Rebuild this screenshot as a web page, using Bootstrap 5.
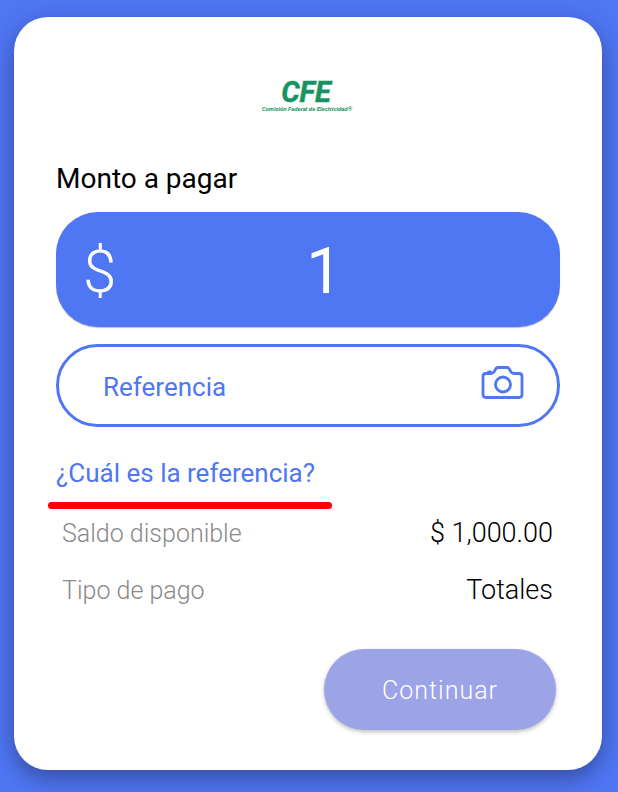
<!DOCTYPE html>
<html lang="es">
<head>
<meta charset="utf-8">
<meta name="viewport" content="width=device-width, initial-scale=1">
<title>Pago CFE</title>
<link href="https://cdn.jsdelivr.net/npm/bootstrap@5.3.0/dist/css/bootstrap.min.css" rel="stylesheet">
<style>
  :root { --brand: #4f76f3; }
  body { background: var(--brand); font-family: Roboto, "Open Sans", sans-serif; color: #000; }
  .page { padding: 17px 16px 22px 14px; }
  .pay-card { border-radius: 34px; padding: 60px 42px 40px; box-shadow: 0 8px 22px rgba(30, 35, 80, .5); }
  .logo { width: 96px; height: 36px; }
  .field-label { font-size: 28px; line-height: 32px; margin: 50px 0 17px; }
  .amount { background: var(--brand); border-radius: 42px; height: 115px; padding: 4px 28px 0 27px; box-shadow: 0 1px 1px rgba(0, 0, 0, .25); font-size: 64px; line-height: 76px; }
  .amount span { font-size: 60px; font-weight: 300; }
  .amount input, .reference input { min-width: 0; background: none; border: 0; outline: 0; padding: 0; }
  .reference { border: 3px solid var(--brand); border-radius: 42px; height: 83px; margin-top: 17px; padding: 0 33px 0 44px; }
  .reference input { font-size: 26px; padding-top: 4px; color: var(--brand); }
  .reference input::placeholder { color: var(--brand); opacity: 1; }
  .scan { width: 43px; height: 36px; color: var(--brand); margin-bottom: 6px; }
  .help { color: var(--brand); font-size: 26px; line-height: 32px; margin-top: 30px; }
  .marker { border: 0; height: 7px; border-radius: 4px; background: #f00; opacity: 1; width: 284px; margin: 13px 0 0 -8px; }
  .details { padding: 8px 7px 0 6px; font-weight: 300; line-height: 33px; row-gap: 24px; }
  .details dt { font-size: 25px; font-weight: 300; color: #8a8a8a; }
  .details dd { font-size: 27px; }
  .btn-go { --bs-btn-color: #fff; width: 232px; height: 81px; margin: 42px 4px 0 0; padding-top: 8px; background: #9ca3e6; color: #fff; font-size: 25px; font-weight: 300; letter-spacing: 1px; box-shadow: 0 2px 4px rgba(0, 0, 0, .25); }
</style>
</head>
<body>
<main class="page">
  <form class="pay-card bg-white d-flex flex-column">
    <svg class="logo align-self-center" viewBox="0 0 96 36" role="img" aria-label="CFE Comisión Federal de Electricidad">
      <g fill="#159461" font-family="Roboto, sans-serif" font-weight="700" font-style="italic">
        <text x="46" y="25" font-size="29" text-anchor="middle" stroke="#159461" stroke-opacity=".5" stroke-width="1">CFE</text>
        <text x="47" y="34" font-size="6" text-anchor="middle">Comisión Federal de Electricidad®</text>
      </g>
    </svg>

    <label class="field-label" for="monto">Monto a pagar</label>
    <div class="amount d-flex align-items-center text-white">
      <span>$</span>
      <input class="flex-grow-1 text-center text-white" id="monto" type="text" inputmode="decimal" value="1">
    </div>

    <div class="reference d-flex align-items-center">
      <input class="flex-grow-1" id="referencia" type="text" placeholder="Referencia" aria-label="Referencia">
      <button class="scan btn p-0 border-0 d-flex" type="button" aria-label="Escanear referencia">
        <svg width="43" height="36" viewBox="0 0 43 36" fill="none" stroke="currentColor" stroke-width="2.800" stroke-linejoin="round" aria-hidden="true">
          <path d="M5 8.500H10C15 8.500 13 2.500 17 2.500H26C30 2.500 28 8.500 33 8.500H38Q41 8.500 41 11.500V29.500Q41 32.500 38 32.500H5Q2 32.500 2 29.500V11.500Q2 8.500 5 8.500Z"/>
          <path d="M7.500 7H9.500" stroke-linecap="round"/>
          <circle cx="22" cy="19.500" r="7.500"/>
        </svg>
      </button>
    </div>

    <a class="help align-self-start text-decoration-none" href="#referencia">¿Cuál es la referencia?</a>
    <hr class="marker">

    <dl class="details d-grid mb-0">
      <div class="d-flex justify-content-between align-items-baseline"><dt>Saldo disponible</dt><dd class="mb-0">$ 1,000.00</dd></div>
      <div class="d-flex justify-content-between align-items-baseline"><dt>Tipo de pago</dt><dd class="mb-0">Totales</dd></div>
    </dl>

    <button class="btn btn-go border-0 rounded-pill align-self-end" type="submit">Continuar</button>
  </form>
</main>
<script src="https://cdn.jsdelivr.net/npm/bootstrap@5.3.0/dist/js/bootstrap.bundle.min.js"></script>
</body>
</html>
